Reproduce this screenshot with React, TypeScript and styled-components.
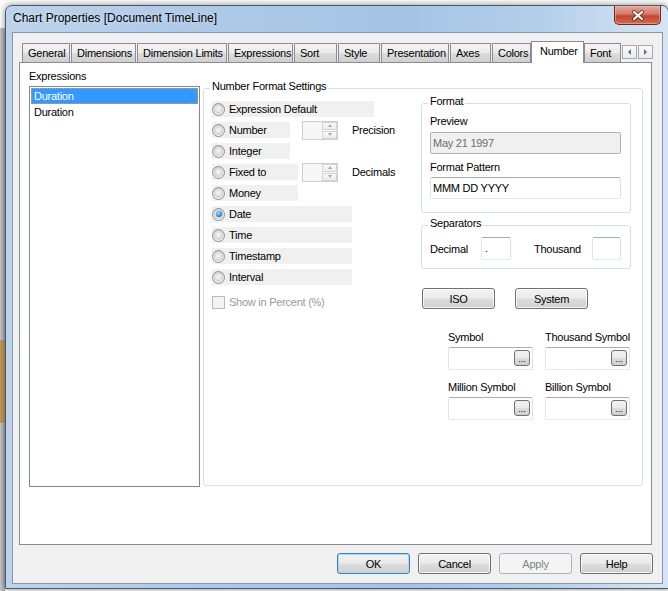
import React from 'react';
import styled, { createGlobalStyle, css } from 'styled-components';

const FONT = `"Liberation Sans", Arial, sans-serif`;

const GlobalStyle = createGlobalStyle`
  html, body { margin: 0; padding: 0; }
  body {
    width: 668px;
    height: 591px;
    overflow: hidden;
    background: #ffffff;
    font-family: ${FONT};
    font-size: 11px;
    color: #000;
  }
  * { box-sizing: border-box; }
`;

const Desktop = styled.div`
  position: relative;
  width: 668px;
  height: 591px;
  padding: 5px 0 0 5px;
  background: #fbfbfb;
  overflow: hidden;
`;

const BackStrip = styled.div`
  position: absolute;
  left: 0;
  top: 28px;
  width: 5px;
  height: 563px;
  background: linear-gradient(to right, #c9c9c9, #a9a9a9);
`;

const BackBlock = styled.div`
  position: absolute;
  left: 0;
  top: 340px;
  width: 5px;
  height: 83px;
  background: #c29a5a;
`;

const Window = styled.div`
  position: relative;
  z-index: 1;
  width: 664px;
  height: 584px;
  border: 1px solid #4a5868;
  border-radius: 7px 7px 0 0;
  background: linear-gradient(
    to right,
    #bcd3ec 0%,
    #adc9e8 30%,
    #a4c3e5 60%,
    #b5d0ec 82%,
    #d6e5f4 100%
  );
  padding: 0 5px 4px 6px;
  display: flex;
  flex-direction: column;
  box-shadow: 0 0 6px rgba(0, 0, 0, 0.45);
`;

const TitleBar = styled.div`
  height: 26px;
  flex: none;
  display: flex;
  align-items: flex-start;
`;

const Title = styled.div`
  padding: 5px 0 0 1px;
  font-size: 12px;
  line-height: 15px;
  color: #000;
  text-shadow: 0 0 5px rgba(255, 255, 255, 0.6);
`;

const CloseButton = styled.div`
  margin-left: auto;
  margin-right: 2px;
  width: 47px;
  height: 19px;
  border: 1px solid #6a2b22;
  border-top: none;
  border-radius: 0 0 5px 5px;
  background: linear-gradient(#e5a79b 0%, #d47a68 45%, #c4452f 55%, #cf6a52 100%);
  box-shadow: inset 0 0 0 1px rgba(255, 200, 190, 0.45);
  display: flex;
  align-items: center;
  justify-content: center;
`;

const Client = styled.div`
  height: 552px;
  flex: none;
  border: 1px solid #8797a9;
  background: #f0f0f0;
  padding: 8px 10px 0 6px;
  display: flex;
  flex-direction: column;
  letter-spacing: -0.25px;
`;

const TabStrip = styled.div`
  height: 21px;
  flex: none;
  display: flex;
  align-items: flex-end;
  padding-left: 3px;
`;

const Tab = styled.div<{ $w: number; $active?: boolean }>`
  width: ${(p) => p.$w}px;
  flex: none;
  height: 19px;
  line-height: 19px;
  padding-left: 5px;
  margin-right: 1px;
  border: 1px solid #898c95;
  border-bottom: none;
  background: linear-gradient(#f3f3f3 0%, #ebebeb 50%, #dddddd 51%, #cfcfcf 100%);
  white-space: nowrap;
  color: #000;
  ${(p) =>
    p.$active &&
    css`
      position: relative;
      z-index: 2;
      height: 22px;
      margin-bottom: -1px;
      margin-left: -1px;
      margin-right: 0;
      padding-left: 8px;
      background: #ffffff;
    `}
`;

const TabScroll = styled.div`
  margin-left: auto;
  align-self: flex-start;
  margin-top: 4px;
  display: flex;
  gap: 1px;
`;

const ScrollButton = styled.div`
  width: 15px;
  height: 14px;
  border: 1px solid #a7abb0;
  background: linear-gradient(#fbfbfb, #e9e9e9);
  display: flex;
  align-items: center;
  justify-content: center;
`;

const ScrollArrow = styled.span<{ $dir: 'left' | 'right' }>`
  width: 0;
  height: 0;
  border-top: 3px solid transparent;
  border-bottom: 3px solid transparent;
  ${(p) =>
    p.$dir === 'left'
      ? css`border-right: 3px solid #4e73a3;`
      : css`border-left: 3px solid #4e73a3;`}
`;

const TabPanel = styled.div`
  height: 483px;
  flex: none;
  border: 1px solid #898c95;
  background: #ffffff;
  padding: 7px 8px 0 9px;
  display: flex;
  align-items: flex-start;
  gap: 3px;
`;

const ExprColumn = styled.div`
  width: 171px;
  flex: none;
  display: flex;
  flex-direction: column;
`;

const FieldLabel = styled.div`
  line-height: 13px;
  height: 13px;
  white-space: nowrap;
`;

const ListBox = styled.div`
  margin-top: 3px;
  height: 401px;
  border: 1px solid #828790;
  padding: 1px;
  background: #fff;
`;

const ListItem = styled.div<{ $selected?: boolean }>`
  height: 16px;
  line-height: 16px;
  padding-left: 3px;
  ${(p) =>
    p.$selected &&
    css`
      background: #3399ff;
      color: #fff;
      outline: 1px dotted #e59a45;
      outline-offset: -1px;
    `}
`;

const GroupBox = styled.div<{ $h: number }>`
  position: relative;
  height: ${(p) => p.$h}px;
  border: 1px solid #d5dfe5;
  border-radius: 3px;
`;

const GroupTitle = styled.span`
  position: absolute;
  top: -9px;
  left: 6px;
  padding: 0 2px;
  line-height: 13px;
  background: #ffffff;
  white-space: nowrap;
`;

const NumberGroup = styled(GroupBox)`
  width: 440px;
  flex: none;
  margin-top: 18px;
  padding: 11px 11px 0 8px;
  display: flex;
`;

const RadioList = styled.div`
  width: 209px;
  flex: none;
  margin-top: 1px;
  display: flex;
  flex-direction: column;
  gap: 5px;
`;

const RadioRow = styled.div`
  height: 16px;
  display: grid;
  grid-template-columns: 90px 50px auto;
  grid-template-rows: 16px;
  align-items: center;
`;

const RadioField = styled.div<{ $w: number; $span?: boolean }>`
  width: ${(p) => p.$w}px;
  height: 16px;
  background: #f0f0f0;
  display: flex;
  align-items: center;
  gap: 4px;
  white-space: nowrap;
  ${(p) => p.$span && css`grid-column: 1 / -1;`}
`;

const RadioDot = styled.span<{ $on?: boolean }>`
  position: relative;
  width: 13px;
  height: 13px;
  flex: none;
  border-radius: 50%;
  border: 1px solid #8e8f8f;
  background: radial-gradient(
    circle at 50% 45%,
    #f4f4f4 0,
    #e6e6e6 2.5px,
    #d0d0d0 4.5px,
    #f6f6f6 5.5px
  );
  ${(p) =>
    p.$on &&
    css`
      &::after {
        content: '';
        position: absolute;
        left: 2.5px;
        top: 2.5px;
        width: 6px;
        height: 6px;
        border-radius: 50%;
        background: radial-gradient(circle at 40% 35%, #a8e0ff 0, #2f8fd6 55%, #174b86 100%);
      }
    `}
`;

const Spin = styled.div`
  width: 36px;
  height: 19px;
  align-self: center;
  border: 1px solid #cdcdcd;
  background: #f7f7f7;
  display: flex;
  justify-content: flex-end;
`;

const SpinButtons = styled.div`
  width: 15px;
  display: flex;
  flex-direction: column;
  gap: 1px;
`;

const SpinButton = styled.div`
  flex: 1;
  border: 1px solid #d4d4d4;
  background: linear-gradient(#fafafa, #ececec);
  display: flex;
  align-items: center;
  justify-content: center;
`;

const SpinArrow = styled.span<{ $up?: boolean }>`
  width: 0;
  height: 0;
  border-left: 2.5px solid transparent;
  border-right: 2.5px solid transparent;
  ${(p) =>
    p.$up
      ? css`border-bottom: 3px solid #a8a8a8;`
      : css`border-top: 3px solid #a8a8a8;`}
`;

const SideLabel = styled.span`
  white-space: nowrap;
`;

const CheckRow = styled.div`
  margin-top: 4px;
  height: 16px;
  display: flex;
  align-items: center;
  gap: 4px;
  color: #9a9a9a;
`;

const CheckBox = styled.span`
  width: 13px;
  height: 13px;
  flex: none;
  border: 1px solid #bcbcbc;
  background: #f4f4f4;
`;

const RightBlock = styled.div`
  width: 210px;
  flex: none;
  margin-top: 3px;
  display: flex;
  flex-direction: column;
`;

const FormatGroup = styled(GroupBox)`
  padding: 11px 9px 0 8px;
  display: flex;
  flex-direction: column;
`;

const TextBox = styled.div<{ $disabled?: boolean }>`
  height: 22px;
  border: 1px solid;
  border-color: #abadb3 #dbdfe6 #e3e9ef #e2e3ea;
  border-radius: 2px;
  background: #ffffff;
  padding-left: 2px;
  line-height: 20px;
  white-space: nowrap;
  ${(p) =>
    p.$disabled &&
    css`
      border-color: #adb2b5;
      background: #f0f0f0;
      color: #6d6d6d;
    `}
`;

const PreviewBox = styled(TextBox)`
  margin-top: 4px;
`;

const PatternBox = styled(TextBox)`
  margin-top: 3px;
`;

const SpacedLabel = styled(FieldLabel)`
  margin-top: 7px;
`;

const SepGroup = styled(GroupBox)`
  margin-top: 12px;
  padding: 11px 9px 0 8px;
  display: grid;
  grid-template-columns: 51px 30px 81px 29px;
  align-items: center;
  align-content: start;
`;

const ThousandLabel = styled.span`
  padding-left: 23px;
`;

const SepInput = styled(TextBox)`
  height: 23px;
  padding-left: 3px;
`;

const ActionRow = styled.div`
  margin-top: 19px;
  padding-left: 1px;
  display: flex;
  gap: 20px;
`;

const Button = styled.div<{ $w: number; $variant?: 'default' | 'disabled' }>`
  width: ${(p) => p.$w}px;
  height: 21px;
  flex: none;
  border: 1px solid #707070;
  border-radius: 3px;
  background: linear-gradient(#f2f2f2 0%, #ebebeb 48%, #dddddd 52%, #cfcfcf 100%);
  box-shadow: inset 0 0 0 1px rgba(255, 255, 255, 0.75);
  display: flex;
  align-items: center;
  justify-content: center;
  color: #000;
  ${(p) =>
    p.$variant === 'default' &&
    css`
      border-color: #3c7fb1;
      box-shadow: inset 0 0 0 1px #a6dcf7;
    `}
  ${(p) =>
    p.$variant === 'disabled' &&
    css`
      border-color: #adb2b5;
      background: #f4f4f4;
      box-shadow: none;
      color: #838383;
    `}
`;

const SymbolGrid = styled.div`
  margin-top: 22px;
  padding-left: 27px;
  display: grid;
  grid-template-columns: 85px 85px;
  column-gap: 12px;
`;

const SymbolCell = styled.div<{ $row: number }>`
  display: flex;
  flex-direction: column;
  gap: 3px;
  ${(p) => p.$row > 0 && css`margin-top: 11px;`}
`;

const SymbolField = styled.div`
  height: 23px;
  border: 1px solid;
  border-color: #abadb3 #dbdfe6 #e3e9ef #e2e3ea;
  border-radius: 2px;
  background: #ffffff;
  padding: 2px;
  display: flex;
  justify-content: flex-end;
  align-items: flex-start;
`;

const EllipsisButton = styled.div`
  width: 16px;
  height: 16px;
  border: 1px solid #707070;
  border-radius: 3px;
  background: linear-gradient(#f2f2f2 0%, #ebebeb 48%, #dddddd 52%, #cfcfcf 100%);
  font-size: 9px;
  line-height: 16px;
  text-align: center;
  letter-spacing: 0;
  color: #000;
`;

const ButtonBar = styled.div`
  flex: 1;
  padding-top: 8px;
  margin-right: -1px;
  display: flex;
  justify-content: flex-end;
  align-items: flex-start;
  gap: 8px;
`;

const tabs = [
  { label: 'General', w: 48 },
  { label: 'Dimensions', w: 65 },
  { label: 'Dimension Limits', w: 90 },
  { label: 'Expressions', w: 65 },
  { label: 'Sort', w: 43 },
  { label: 'Style', w: 42 },
  { label: 'Presentation', w: 68 },
  { label: 'Axes', w: 41 },
  { label: 'Colors', w: 39 },
  { label: 'Number', w: 53, active: true },
  { label: 'Font', w: 37 },
];

const formats: { label: string; w: number; spin?: string; on?: boolean }[] = [
  { label: 'Expression Default', w: 162 },
  { label: 'Number', w: 78, spin: 'Precision' },
  { label: 'Integer', w: 78 },
  { label: 'Fixed to', w: 86, spin: 'Decimals' },
  { label: 'Money', w: 86 },
  { label: 'Date', w: 140, on: true },
  { label: 'Time', w: 140 },
  { label: 'Timestamp', w: 140 },
  { label: 'Interval', w: 140 },
];

const symbols = ['Symbol', 'Thousand Symbol', 'Million Symbol', 'Billion Symbol'];

export default function App() {
  return (
    <>
      <GlobalStyle />
      <Desktop>
        <BackStrip />
        <BackBlock />
        <Window>
          <TitleBar>
            <Title>Chart Properties [Document TimeLine]</Title>
            <CloseButton>
              <svg width="14" height="11" viewBox="0 0 14 11">
                <path d="M3 2 L11 9 M11 2 L3 9" stroke="#4a1f18" strokeWidth="4" strokeLinecap="round" fill="none" opacity="0.7" />
                <path d="M3 2 L11 9 M11 2 L3 9" stroke="#ffffff" strokeWidth="2.2" strokeLinecap="round" fill="none" />
              </svg>
            </CloseButton>
          </TitleBar>
          <Client>
            <TabStrip>
              {tabs.map((t) => (
                <Tab key={t.label} $w={t.w} $active={t.active}>
                  {t.label}
                </Tab>
              ))}
              <TabScroll>
                <ScrollButton>
                  <ScrollArrow $dir="left" />
                </ScrollButton>
                <ScrollButton>
                  <ScrollArrow $dir="right" />
                </ScrollButton>
              </TabScroll>
            </TabStrip>
            <TabPanel>
              <ExprColumn>
                <FieldLabel>Expressions</FieldLabel>
                <ListBox>
                  <ListItem $selected>Duration</ListItem>
                  <ListItem>Duration</ListItem>
                </ListBox>
              </ExprColumn>
              <NumberGroup $h={398}>
                <GroupTitle>Number Format Settings</GroupTitle>
                <RadioList>
                  {formats.map((f) => (
                    <RadioRow key={f.label}>
                      <RadioField $w={f.w} $span={!f.spin}>
                        <RadioDot $on={f.on} />
                        {f.label}
                      </RadioField>
                      {f.spin && (
                        <>
                          <Spin>
                            <SpinButtons>
                              <SpinButton>
                                <SpinArrow $up />
                              </SpinButton>
                              <SpinButton>
                                <SpinArrow />
                              </SpinButton>
                            </SpinButtons>
                          </Spin>
                          <SideLabel>{f.spin}</SideLabel>
                        </>
                      )}
                    </RadioRow>
                  ))}
                  <CheckRow>
                    <CheckBox />
                    Show in Percent (%)
                  </CheckRow>
                </RadioList>
                <RightBlock>
                  <FormatGroup $h={110}>
                    <GroupTitle>Format</GroupTitle>
                    <FieldLabel>Preview</FieldLabel>
                    <PreviewBox $disabled>May 21 1997</PreviewBox>
                    <SpacedLabel>Format Pattern</SpacedLabel>
                    <PatternBox>MMM DD YYYY</PatternBox>
                  </FormatGroup>
                  <SepGroup $h={44}>
                    <GroupTitle>Separators</GroupTitle>
                    <span>Decimal</span>
                    <SepInput>.</SepInput>
                    <ThousandLabel>Thousand</ThousandLabel>
                    <SepInput />
                  </SepGroup>
                  <ActionRow>
                    <Button $w={73}>ISO</Button>
                    <Button $w={73}>System</Button>
                  </ActionRow>
                  <SymbolGrid>
                    {symbols.map((s, i) => (
                      <SymbolCell key={s} $row={Math.floor(i / 2)}>
                        <FieldLabel>{s}</FieldLabel>
                        <SymbolField>
                          <EllipsisButton>...</EllipsisButton>
                        </SymbolField>
                      </SymbolCell>
                    ))}
                  </SymbolGrid>
                </RightBlock>
              </NumberGroup>
            </TabPanel>
            <ButtonBar>
              <Button $w={73} $variant="default">OK</Button>
              <Button $w={73}>Cancel</Button>
              <Button $w={73} $variant="disabled">Apply</Button>
              <Button $w={73}>Help</Button>
            </ButtonBar>
          </Client>
        </Window>
      </Desktop>
    </>
  );
}
